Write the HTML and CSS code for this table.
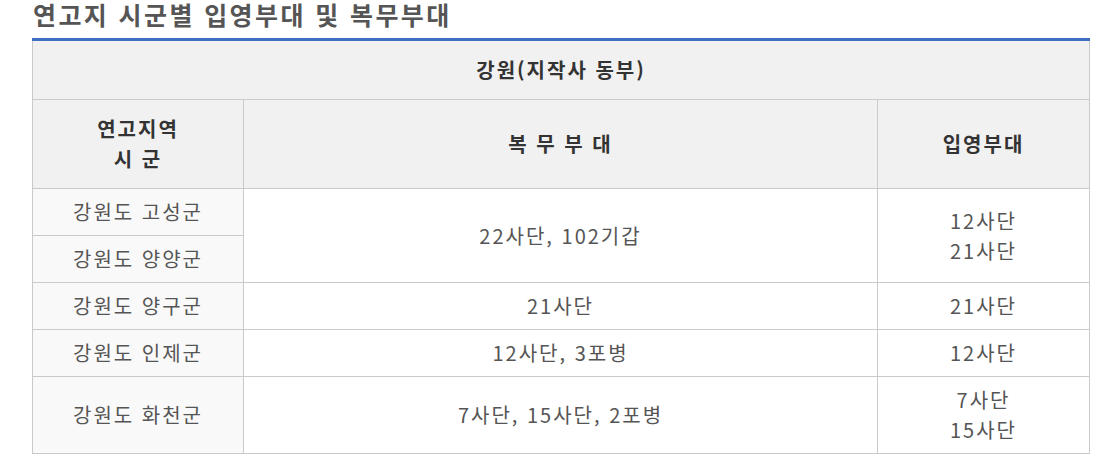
FILE: index.html
```html
<!DOCTYPE html>
<html lang="ko">
<head>
<meta charset="utf-8">
<link rel="stylesheet" href="styles.css">
</head>
<body>
<div class="wrap">
  <h2 class="title">연고지 시군별 입영부대 및 복무부대</h2>
  <table class="units">
    <colgroup>
      <col class="c1"><col class="c2"><col class="c3">
    </colgroup>
    <thead>
      <tr><th colspan="3">강원(지작사 동부)</th></tr>
      <tr><th>연고지역<br>시 군</th><th>복 무 부 대</th><th>입영부대</th></tr>
    </thead>
    <tbody>
      <tr><td class="area">강원도 고성군</td><td rowspan="2">22사단, 102기갑</td><td rowspan="2">12사단<br>21사단</td></tr>
      <tr><td class="area">강원도 양양군</td></tr>
      <tr><td class="area">강원도 양구군</td><td>21사단</td><td>21사단</td></tr>
      <tr><td class="area">강원도 인제군</td><td>12사단, 3포병</td><td>12사단</td></tr>
      <tr><td class="area">강원도 화천군</td><td>7사단, 15사단, 2포병</td><td>7사단<br>15사단</td></tr>
    </tbody>
  </table>
</div>
</body>
</html>
```

FILE: styles.css
```css
html, body {
  margin: 0;
  padding: 0;
  background: #fff;
}
body {
  font-family: "Noto Sans CJK KR", "Noto Sans", sans-serif;
  color: #555;
}
.wrap {
  padding-left: 32px;
  width: 1057px;
}
.title {
  margin: 0 0 9px 1px;
  font-size: 25px;
  line-height: 29px;
  letter-spacing: 2.4px;
  font-weight: bold;
  color: #555;
  white-space: nowrap;
}
.units {
  width: 1057px;
  border-collapse: collapse;
  border-top: 3px solid #3e6fc0;
  table-layout: fixed;
}
.c1 { width: 211px; }
.c2 { width: 634px; }
.c3 { width: 212px; }
.units th, .units td {
  border: 1px solid #cacaca;
  text-align: center;
  vertical-align: middle;
  line-height: 30px;
  font-size: 20px;
  letter-spacing: 2px;
}
.units thead tr:first-child th {
  border-top: 0;
}
.units th {
  background: #f1f1f1;
  color: #333;
  font-weight: bold;
  padding: 14px 0;
}
.units td {
  background: #fff;
  color: #555;
  padding: 8px 0;
}
.units td.area {
  background: #f9f9f9;
}
```
